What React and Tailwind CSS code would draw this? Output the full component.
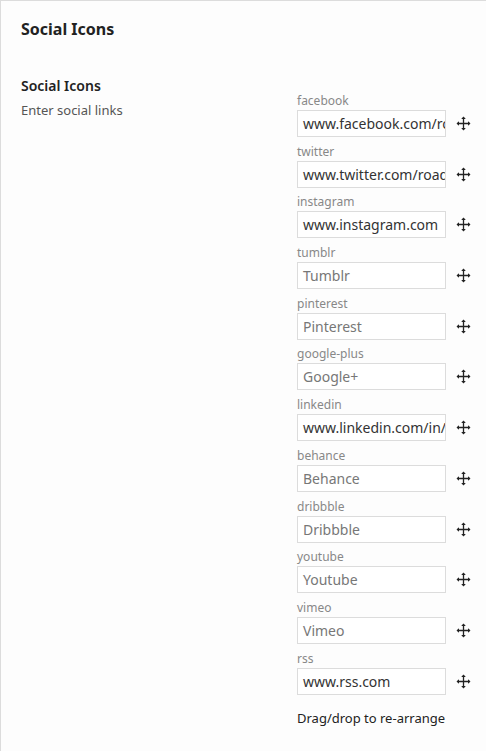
import React from "react";

const fields = [
  ["facebook", "www.facebook.com/roadthemes", true],
  ["twitter", "www.twitter.com/roadthemes", true],
  ["instagram", "www.instagram.com", true],
  ["tumblr", "Tumblr", false],
  ["pinterest", "Pinterest", false],
  ["google-plus", "Google+", false],
  ["linkedin", "www.linkedin.com/in/kevin", true],
  ["behance", "Behance", false],
  ["dribbble", "Dribbble", false],
  ["youtube", "Youtube", false],
  ["vimeo", "Vimeo", false],
  ["rss", "www.rss.com", true],
];

function MoveIcon() {
  return (
    <svg width="15" height="15" viewBox="0 0 15 15" fill="none">
      <path d="M7.5 1.5V13.5M1.5 7.5H13.5" stroke="#222" strokeWidth="1.3" />
      <path d="M7.5 0.5L5.2 3H9.8Z M7.5 14.5L5.2 12H9.8Z M0.5 7.5L3 5.2V9.8Z M14.5 7.5L12 5.2V9.8Z" fill="#222" />
    </svg>
  );
}

export default function App() {
  return (
    <div
      className="w-[486px] h-[751px] bg-[#fdfdfd] border-l border-t border-[#dcdcdc] overflow-hidden"
      style={{ fontFamily: '"Noto Sans", "Open Sans", sans-serif' }}
    >
      <div className="pl-[20px] pt-[17px]">
        <h1 className="text-[16px] font-bold text-[#222] leading-[22px]">Social Icons</h1>
        <div className="flex mt-[36px]">
          <div className="w-[276px] shrink-0">
            <div className="text-[14px] font-semibold text-[#222] leading-[20px]">Social Icons</div>
            <div className="text-[13px] text-[#555] leading-[18px] mt-[5px]">Enter social links</div>
          </div>
          <div className="flex flex-col pt-[17px]">
            {fields.map(([label, val, filled]) => (
              <div key={label} className="flex flex-col h-[50.7px]">
                <div className="text-[12px] text-[#888] leading-[16px] h-[17px]">{label}</div>
                <div className="flex items-center">
                  <div className="w-[149px] h-[27px] border border-[#dcdcdc] bg-white px-[5px] flex items-center overflow-hidden">
                    <span className={"whitespace-nowrap text-[14px] " + (filled ? "text-[#333]" : "text-[#777]")}>
                      {val}
                    </span>
                  </div>
                  <div className="ml-[10px] flex items-center">
                    <MoveIcon />
                  </div>
                </div>
              </div>
            ))}
            <div className="text-[13px] text-[#222] mt-[8px] leading-[18px]">Drag/drop to re-arrange</div>
          </div>
        </div>
      </div>
    </div>
  );
}
